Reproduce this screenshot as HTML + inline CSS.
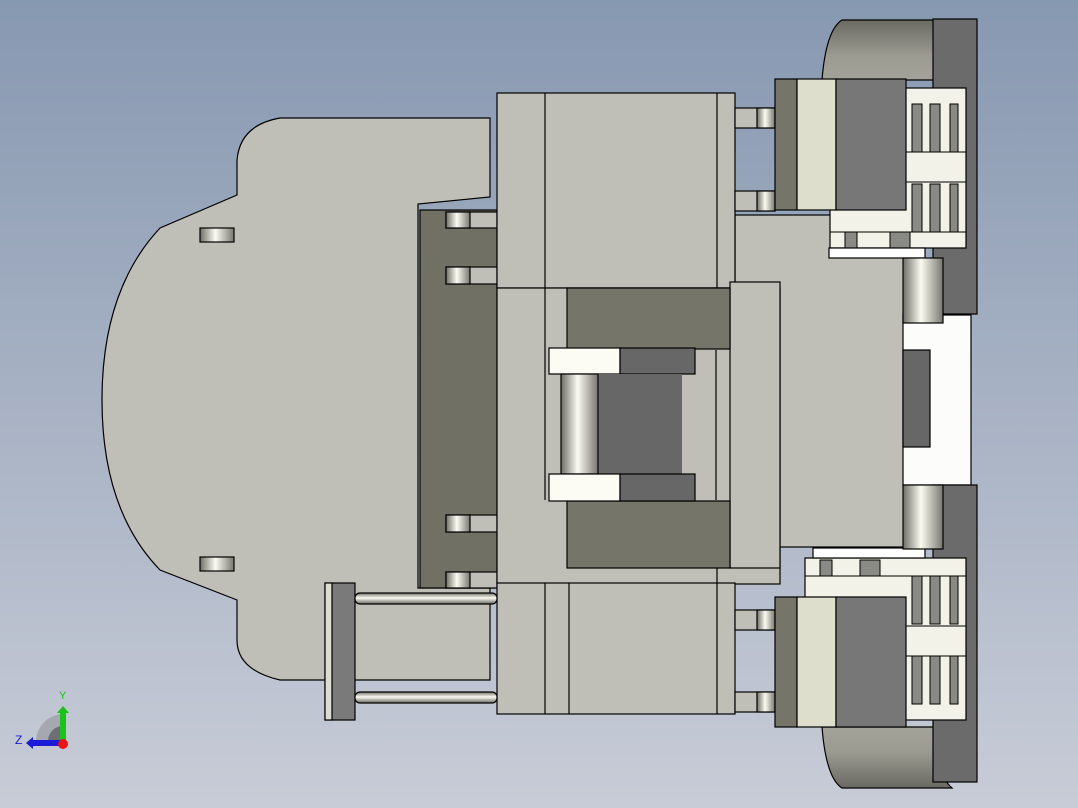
<!DOCTYPE html>
<html><head><meta charset="utf-8"><style>
html,body{margin:0;padding:0;width:1078px;height:808px;overflow:hidden}
svg{display:block}
</style></head><body>
<svg width="1078" height="808" viewBox="0 0 1078 808" xmlns="http://www.w3.org/2000/svg">
<defs>
<linearGradient id="bg" x1="0" y1="0" x2="0" y2="1">
<stop offset="0" stop-color="#8798b1"/><stop offset="1" stop-color="#c8ccd7"/></linearGradient>
<linearGradient id="cyl" x1="0" y1="0" x2="1" y2="0">
<stop offset="0" stop-color="#6e6e66"/><stop offset="0.45" stop-color="#fbfbf2"/><stop offset="1" stop-color="#77776f"/></linearGradient>
<linearGradient id="cylv" x1="0" y1="0" x2="0" y2="1">
<stop offset="0" stop-color="#6e6e66"/><stop offset="0.45" stop-color="#fbfbf2"/><stop offset="1" stop-color="#66665e"/></linearGradient>
<linearGradient id="drum" x1="0" y1="0" x2="0" y2="1">
<stop offset="0" stop-color="#6a6a62"/><stop offset="0.6" stop-color="#9c9b92"/><stop offset="1" stop-color="#a3a298"/></linearGradient>
<linearGradient id="drum2" x1="0" y1="1" x2="0" y2="0">
<stop offset="0" stop-color="#6a6a62"/><stop offset="0.6" stop-color="#9c9b92"/><stop offset="1" stop-color="#a3a298"/></linearGradient>
</defs>
<rect width="1078" height="808" fill="url(#bg)"/>
<g stroke="#000" stroke-width="1.2">
<!-- left plate -->
<path d="M280,118 L490,118 L490,197 L418,204 L418,588 L490,588 L490,680 L280,680 Q237,670 237,640 L237,600 L160,570 Q102,510 102,400 Q102,290 160,228 L237,195 L237,160 Q240,125 280,118 Z" fill="#bfbfb7"/>
<rect x="420" y="210" width="77" height="378" fill="#707064"/>
<rect x="446" y="212" width="51" height="16" fill="#bfbfb7"/><rect x="446" y="212" width="24" height="16" fill="url(#cyl)"/>
<rect x="446" y="267" width="51" height="17" fill="#bfbfb7"/><rect x="446" y="267" width="24" height="17" fill="url(#cyl)"/>
<rect x="446" y="515" width="51" height="17" fill="#bfbfb7"/><rect x="446" y="515" width="24" height="17" fill="url(#cyl)"/>
<rect x="446" y="572" width="51" height="16" fill="#bfbfb7"/><rect x="446" y="572" width="24" height="16" fill="url(#cyl)"/>
<rect x="200" y="228" width="34" height="14" fill="url(#cyl)"/>
<rect x="200" y="557" width="34" height="14" fill="url(#cyl)"/>
<!-- right gray region -->
<rect x="735" y="215" width="170" height="332" fill="#bfbfb7"/>
<rect x="903" y="315" width="68" height="170" fill="#fcfcfa"/>
<rect x="903" y="350" width="27" height="97" fill="#676767"/>
<!-- central blocks -->
<rect x="497" y="93" width="238" height="195" fill="#bfbfb7"/>
<line x1="545" y1="93" x2="545" y2="288"/><line x1="717" y1="93" x2="717" y2="288"/>
<rect x="497" y="288" width="283" height="296" fill="#bfbfb7"/>
<rect x="730" y="282" width="50" height="286" fill="#bfbfb7"/>
<rect x="497" y="583" width="238" height="131" fill="#bfbfb7"/>
<line x1="545" y1="583" x2="545" y2="714"/><line x1="569" y1="583" x2="569" y2="714"/><line x1="717" y1="568" x2="717" y2="714"/>
<line x1="545" y1="288" x2="545" y2="500"/><line x1="716" y1="350" x2="716" y2="500"/>
<rect x="567" y="288" width="163" height="61" fill="#75756a"/>
<rect x="567" y="501" width="163" height="67" fill="#75756a"/>
<rect x="549" y="348" width="71" height="26" fill="#fcfcf5"/><rect x="620" y="348" width="75" height="26" fill="#676767"/>
<rect x="598" y="374" width="84" height="100" fill="#676767" stroke="none"/>
<rect x="561" y="374" width="37" height="100" fill="url(#cyl)"/>
<rect x="549" y="474" width="71" height="27" fill="#fcfcf5"/><rect x="620" y="474" width="75" height="27" fill="#676767"/>
<!-- rods -->
<rect x="325" y="583" width="30" height="137" fill="#7a7a7a"/><rect x="325" y="583" width="7" height="137" fill="#dcdcd0"/>
<rect x="355" y="593" width="142" height="11" rx="5" fill="url(#cylv)"/>
<rect x="355" y="692" width="142" height="11" rx="5" fill="url(#cylv)"/>
<!-- top right assembly -->
<path d="M822,80 Q826,30 842,20 L952,20 Q935,35 933,80 Z" fill="url(#drum)"/>
<rect x="933" y="19" width="44" height="295" fill="#6b6b6b"/>
<rect x="735" y="108" width="40" height="20" fill="#bfbfb7"/><rect x="757" y="108" width="18" height="20" fill="url(#cyl)"/>
<rect x="735" y="191" width="40" height="20" fill="#bfbfb7"/><rect x="757" y="191" width="18" height="20" fill="url(#cyl)"/>
<rect x="830" y="88" width="136" height="160" fill="#f2f2e8"/>
<g stroke-width="1" fill="#8a8a84">
<rect x="912" y="104" width="10" height="48"/><rect x="930" y="104" width="10" height="48"/><rect x="950" y="104" width="8" height="48"/>
<rect x="912" y="184" width="10" height="48"/><rect x="930" y="184" width="10" height="48"/><rect x="950" y="184" width="8" height="48"/>
<line x1="830" y1="152" x2="966" y2="152"/><line x1="830" y1="182" x2="966" y2="182"/><line x1="830" y1="232" x2="966" y2="232"/>
<rect x="845" y="232" width="12" height="16"/><rect x="890" y="232" width="20" height="16"/>
</g>
<rect x="829" y="248" width="96" height="10" fill="#fff"/>
<rect x="903" y="258" width="40" height="65" fill="url(#cyl)"/>
<rect x="775" y="79" width="22" height="131" fill="#75756a"/>
<rect x="797" y="79" width="39" height="131" fill="#dedecd"/>
<rect x="836" y="79" width="70" height="131" fill="#777"/>
<!-- bottom right assembly -->
<path d="M822,727 Q826,778 842,788 L952,788 Q935,773 933,727 Z" fill="url(#drum2)"/>
<rect x="933" y="485" width="44" height="297" fill="#6b6b6b"/>
<rect x="735" y="610" width="40" height="20" fill="#bfbfb7"/><rect x="757" y="610" width="18" height="20" fill="url(#cyl)"/>
<rect x="735" y="692" width="40" height="20" fill="#bfbfb7"/><rect x="757" y="692" width="18" height="20" fill="url(#cyl)"/>
<rect x="805" y="558" width="161" height="162" fill="#f2f2e8"/>
<g stroke-width="1" fill="#8a8a84">
<rect x="912" y="576" width="10" height="48"/><rect x="930" y="576" width="10" height="48"/><rect x="950" y="576" width="8" height="48"/>
<rect x="912" y="656" width="10" height="48"/><rect x="930" y="656" width="10" height="48"/><rect x="950" y="656" width="8" height="48"/>
<line x1="805" y1="576" x2="966" y2="576"/><line x1="830" y1="626" x2="966" y2="626"/><line x1="830" y1="656" x2="966" y2="656"/>
<rect x="820" y="560" width="12" height="16"/><rect x="860" y="560" width="20" height="16"/>
</g>
<rect x="813" y="548" width="112" height="10" fill="#fff"/>
<rect x="903" y="485" width="40" height="64" fill="url(#cyl)"/>
<rect x="775" y="597" width="22" height="130" fill="#75756a"/>
<rect x="797" y="597" width="39" height="130" fill="#dedecd"/>
<rect x="836" y="597" width="70" height="130" fill="#777"/>
</g>
<!-- triad -->
<path d="M36,741 A28,28 0 0 1 63,714 L63,741 Z" fill="#a5a8ae"/>
<path d="M48,741 A15,15 0 0 1 63,726 L63,741 Z" fill="#6c6f74"/>
<rect x="60" y="712" width="6" height="29" fill="#1ac31a"/><path d="M57,713 L63,706 L69,713 Z" fill="#1ac31a"/>
<rect x="32" y="740" width="31" height="6" fill="#1a1ad8"/><path d="M33,737 L26,743 L33,749 Z" fill="#1a1ad8"/>
<circle cx="63" cy="744" r="5" fill="#e61414"/>
<text x="59" y="699" font-family="Liberation Sans, sans-serif" font-size="11" fill="#1ac31a">Y</text>
<text x="15" y="744" font-family="Liberation Sans, sans-serif" font-size="12" fill="#1a1ad8">Z</text>
</svg>
</body></html>
